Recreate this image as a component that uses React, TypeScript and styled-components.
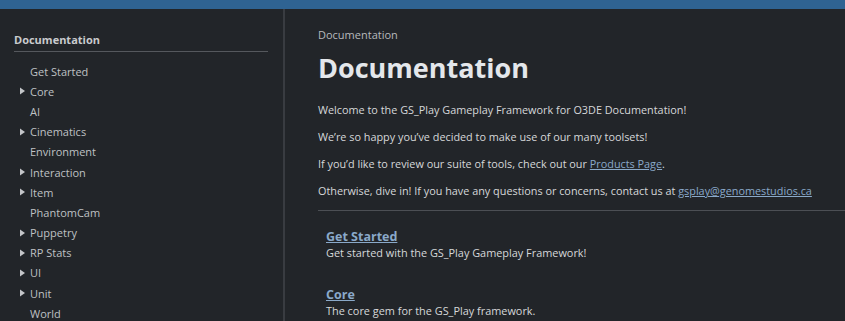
import React from "react";
import styled, { createGlobalStyle } from "styled-components";

const GlobalStyle = createGlobalStyle`
  html, body {
    margin: 0;
    padding: 0;
    background: #222529;
    font-family: "Open Sans", "Noto Sans", sans-serif;
    color: #d2d4d6;
    overflow: hidden;
  }
`;

const TopBar = styled.div`
  height: 9px;
  background: #2f6392;
`;

const Layout = styled.div`
  display: flex;
  height: 312px;
`;

const Sidebar = styled.nav`
  width: 285px;
  flex-shrink: 0;
  box-sizing: border-box;
  border-right: 2px solid #393c41;
  padding: 23px 15px 0 14px;
`;

const SideTitle = styled.div`
  font-size: 11px;
  font-weight: 700;
  color: #c9cbce;
  padding-bottom: 4px;
  border-bottom: 1px solid #55585d;
`;

const SideList = styled.ul`
  list-style: none;
  margin: 9px 0 0;
  padding: 0;
`;

const SideItem = styled.li`
  display: flex;
  align-items: center;
  height: 20.2px;
  font-size: 11px;
  color: #bfc1c4;
`;

const Caret = styled.span<{ $show: boolean }>`
  width: 16px;
  display: flex;
  justify-content: center;
  visibility: ${(p) => (p.$show ? "visible" : "hidden")};
  svg {
    display: block;
  }
`;

const Main = styled.main`
  flex: 1;
  padding: 18px 0 0 33px;
`;

const Crumb = styled.div`
  font-size: 11px;
  color: #b7b9bc;
`;

const Title = styled.h1`
  margin: 6px 0 14px;
  font-size: 27px;
  font-weight: 700;
  color: #e4e7eb;
  line-height: 40px;
`;

const Para = styled.p`
  margin: 0 0 11px;
  font-size: 10.85px;
  line-height: 16px;
  color: #d6d8da;
`;

const Link = styled.a`
  color: #8aa9c9;
  text-decoration: underline;
`;

const Rule = styled.hr`
  margin: 2px 0 0;
  border: 0;
  border-top: 1px solid #4c4f54;
`;

const Cards = styled.div`
  display: flex;
  flex-direction: column;
  gap: 27px;
  padding: 18px 0 0 8px;
`;

const Card = styled.div`
  display: flex;
  flex-direction: column;
`;

const CardTitle = styled.a`
  font-size: 12.5px;
  font-weight: 700;
  line-height: 16px;
  color: #8aa9c9;
  text-decoration: underline;
`;

const CardText = styled.div`
  font-size: 10.9px;
  line-height: 15px;
  color: #d6d8da;
`;

const items: [string, boolean][] = [
  ["Get Started", false],
  ["Core", true],
  ["AI", false],
  ["Cinematics", true],
  ["Environment", false],
  ["Interaction", true],
  ["Item", true],
  ["PhantomCam", false],
  ["Puppetry", true],
  ["RP Stats", true],
  ["UI", true],
  ["Unit", true],
  ["World", false],
];

const Triangle = () => (
  <svg width="5" height="8" viewBox="0 0 5 8">
    <path d="M0 0.5 L5 4 L0 7.5 Z" fill="#c4c6c9" />
  </svg>
);

export default function App() {
  return (
    <>
      <GlobalStyle />
      <TopBar />
      <Layout>
        <Sidebar>
          <SideTitle>Documentation</SideTitle>
          <SideList>
            {items.map(([label, sub]) => (
              <SideItem key={label}>
                <Caret $show={sub}>
                  <Triangle />
                </Caret>
                {label}
              </SideItem>
            ))}
          </SideList>
        </Sidebar>
        <Main>
          <Crumb>Documentation</Crumb>
          <Title>Documentation</Title>
          <Para>Welcome to the GS_Play Gameplay Framework for O3DE Documentation!</Para>
          <Para>We’re so happy you’ve decided to make use of our many toolsets!</Para>
          <Para>
            If you’d like to review our suite of tools, check out our <Link>Products Page</Link>.
          </Para>
          <Para>
            Otherwise, dive in! If you have any questions or concerns, contact us at{" "}
            <Link>gsplay@genomestudios.ca</Link>
          </Para>
          <Rule />
          <Cards>
            <Card>
              <CardTitle>Get Started</CardTitle>
              <CardText>Get started with the GS_Play Gameplay Framework!</CardText>
            </Card>
            <Card>
              <CardTitle>Core</CardTitle>
              <CardText>The core gem for the GS_Play framework.</CardText>
            </Card>
          </Cards>
        </Main>
      </Layout>
    </>
  );
}
